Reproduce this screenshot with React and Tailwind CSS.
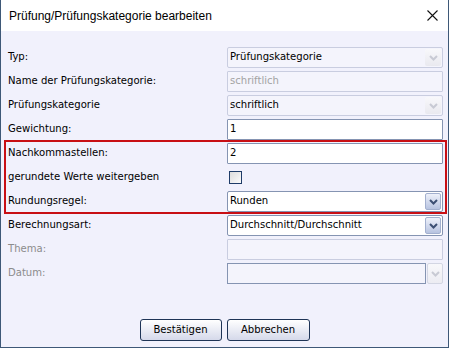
import React from "react";

const FONT = { fontFamily: '"DejaVu Sans Condensed", "DejaVu Sans", Tahoma, sans-serif' };
const TITLE_FONT = { fontFamily: '"Liberation Sans", Arial, sans-serif' };

function Chevron({ color }) {
  return (
    <svg width="9" height="6" viewBox="0 0 9 6">
      <path d="M1 1 L4.5 4.5 L8 1" fill="none" stroke={color} strokeWidth="2" />
    </svg>
  );
}

function DisabledCombo({ value }) {
  return (
    <div className="flex h-[21px] items-center rounded-[2px] border border-[#c9cde0] bg-[#f4f4fc]">
      <span className="flex-1 pl-[2px] text-black">{value}</span>
      <div className="mr-[1px] flex h-[17px] w-[16px] items-center justify-center rounded-[2px] bg-gradient-to-b from-[#f8f8fb] to-[#e9e9ef]">
        <Chevron color="#c8cad4" />
      </div>
    </div>
  );
}

function EnabledCombo({ value }) {
  return (
    <div className="flex h-[21px] items-center rounded-[2px] border border-[#8594b2] bg-white">
      <span className="flex-1 pl-[2px] text-black">{value}</span>
      <div className="mr-[1px] flex h-[17px] w-[16px] items-center justify-center rounded-[2px] border border-[#a3b0cf] bg-gradient-to-b from-[#eef1fa] to-[#b7c3e0]">
        <Chevron color="#3c4f73" />
      </div>
    </div>
  );
}

function TextBox({ value, disabled }) {
  return (
    <div
      className={
        disabled
          ? "flex h-[21px] items-center rounded-[1px] border border-[#c9cde0] bg-[#f4f4fc]"
          : "flex h-[21px] items-center rounded-[1px] border border-[#8594b2] bg-white"
      }
    >
      <span className={disabled ? "pl-[2px] text-[#a3a3a3]" : "pl-[2px] text-black"}>{value}</span>
    </div>
  );
}

function Row({ label, gray, children }) {
  return (
    <div className="grid h-[21px] grid-cols-[1fr_216px] items-center">
      <span className={gray ? "text-[#8c8c8c]" : "text-black"}>{label}</span>
      <div>{children}</div>
    </div>
  );
}

export default function App() {
  return (
    <div className="h-[348px] w-[449px] text-[11.2px]" style={FONT}>
      <div className="flex h-full w-full flex-col border-x border-b border-[#3e5877] bg-[#f1f1fc]">
        <div className="flex h-[31px] items-center justify-between bg-white pl-[8px] pr-[10px]" style={TITLE_FONT}>
          <span className="text-[12px] text-black">Prüfung/Prüfungskategorie bearbeiten</span>
          <svg width="11" height="11" viewBox="0 0 11 11">
            <path d="M0.5 0.5 L10.5 10.5 M10.5 0.5 L0.5 10.5" stroke="#111" strokeWidth="1.1" />
          </svg>
        </div>
        <div className="flex flex-col gap-[3px] pl-[7px] pr-[5px] pt-[16px]">
          <Row label="Typ:">
            <DisabledCombo value="Prüfungskategorie" />
          </Row>
          <Row label="Name der Prüfungskategorie:">
            <TextBox value="schriftlich" disabled />
          </Row>
          <Row label="Prüfungskategorie">
            <DisabledCombo value="schriftlich" />
          </Row>
          <Row label="Gewichtung:">
            <TextBox value="1" />
          </Row>
          <div className="-mb-[2px] -ml-[4px] -mr-[4px] -mt-[3px] flex flex-col gap-[3px] border-2 border-[#c80f14] pb-0 pl-[2px] pr-[2px] pt-[1px]">
            <Row label="Nachkommastellen:">
              <TextBox value="2" />
            </Row>
            <Row label="gerundete Werte weitergeben">
              <div className="ml-[2px] h-[13px] w-[13px] border border-[#1f3c68] bg-gradient-to-br from-[#dcdcdc] to-[#fbfbfb]" />
            </Row>
            <Row label="Rundungsregel:">
              <EnabledCombo value="Runden" />
            </Row>
          </div>
          <Row label="Berechnungsart:">
            <EnabledCombo value="Durchschnitt/Durchschnitt" />
          </Row>
          <Row label="Thema:" gray>
            <TextBox value="" disabled />
          </Row>
          <Row label="Datum:" gray>
            <div className="flex h-[21px] gap-[1px]">
              <div className="flex-1 border border-[#8594b2] bg-[#f4f4fc]" />
              <div className="flex w-[16px] items-center justify-center rounded-[2px] border border-[#d3d6e3] bg-gradient-to-b from-[#f8f8fb] to-[#ececf2]">
                <Chevron color="#c8cad4" />
              </div>
            </div>
          </Row>
        </div>
        <div className="mt-auto flex justify-center gap-[5px] pb-[6px]">
          <button className="h-[22px] w-[82px] rounded-[3px] border border-[#1e3456] bg-gradient-to-b from-white to-[#d5d9ea] text-black">
            Bestätigen
          </button>
          <button className="h-[22px] w-[83px] rounded-[3px] border border-[#1e3456] bg-gradient-to-b from-white to-[#d5d9ea] text-black">
            Abbrechen
          </button>
        </div>
      </div>
    </div>
  );
}
